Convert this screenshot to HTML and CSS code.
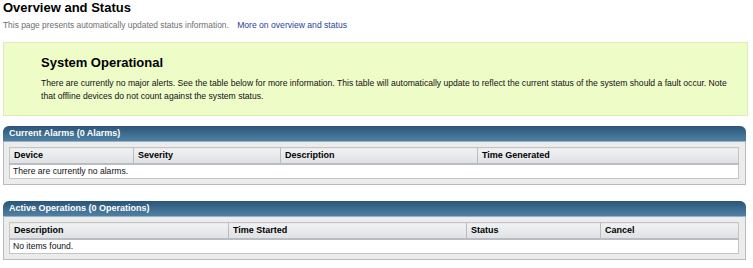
FILE: index.html
```html
<!DOCTYPE html>
<html lang="en">
<head>
    <meta charset="UTF-8">
    <title>Overview and Status</title>
    <link rel="stylesheet" href="styles.css">
</head>
<body>

    <h1>Overview and Status</h1>
    <p class="intro">This page presents automatically updated status information. <a href="#">More on overview and status</a></p>

    <div class="status-box">
        <h2>System Operational</h2>
        <p>There are currently no major alerts. See the table below for more information. This table will automatically update to reflect the current status of the system should a fault occur. Note that offline devices do not count against the system status.</p>
    </div>

    <div class="panel">
        <div class="panel-title">Current Alarms (0 Alarms)</div>
        <div class="panel-body">
            <table>
                <tr>
                    <th style="width:115px">Device</th>
                    <th style="width:138px">Severity</th>
                    <th style="width:188px">Description</th>
                    <th>Time Generated</th>
                </tr>
                <tr><td colspan="4">There are currently no alarms.</td></tr>
            </table>
        </div>
    </div>

    <div class="panel">
        <div class="panel-title">Active Operations (0 Operations)</div>
        <div class="panel-body">
            <table>
                <tr>
                    <th style="width:210px">Description</th>
                    <th style="width:229px">Time Started</th>
                    <th style="width:125px">Status</th>
                    <th>Cancel</th>
                </tr>
                <tr><td colspan="4">No items found.</td></tr>
            </table>
        </div>
    </div>

</body>
</html>
```

FILE: styles.css
```css
body {
    font-family: 'Liberation Sans', Arial, sans-serif;
    margin: 0;
    padding: 0 5px 0 3px;
    background: #ffffff;
    color: #111111;
}
h1 {
    font-size: 13px;
    margin: 0;
    line-height: 16px;
    color: #000000;
}
.intro {
    font-size: 8.4px;
    color: #6f6f6f;
    margin: 3px 0 0 0;
    line-height: 12px;
}
.intro a {
    color: #1f3f9e;
    font-size: 8.6px;
    text-decoration: none;
    margin-left: 6px;
}
.status-box {
    margin-top: 11px;
    background-color: #eefcc8;
    border: 1px solid #d9efb8;
    padding: 12px 10px 0 37px;
    height: 60px;
}
.status-box h2 {
    font-size: 13px;
    margin: 0;
    line-height: 16px;
    color: #000000;
}
.status-box p {
    font-size: 8.6px;
    margin: 6px 0 0 0;
    line-height: 13px;
}
.panel {
    margin: 10px 2px 0 0;
    border: 1px solid #b8bcc0;
    border-top: none;
    border-radius: 6px 6px 0 0;
    background: #ececec;
}
.panel + .panel {
    margin-top: 16px;
}
.panel-title {
    background: linear-gradient(#2a5576, #4f81a4);
    color: #ffffff;
    font-size: 9px;
    font-weight: bold;
    padding: 2px 6px;
    height: 11px;
    line-height: 11px;
    border-radius: 6px 6px 0 0;
    margin: 0 -1px;
    border-bottom: 1px solid #9bb0c0;
}
.panel-body {
    padding: 5px 6px 5px 5px;
}
table {
    width: 100%;
    border-collapse: collapse;
    font-size: 9px;
    background: #ffffff;
    border: 1px solid #c4c4c4;
}
th {
    text-align: left;
    background: linear-gradient(#f0f1f3, #dfe1e4);
    border-right: 1px solid #b9bcc0;
    border-bottom: 2px solid #b9bcc0;
    padding: 2px 4px;
    height: 11px;
    line-height: 11px;
    color: #000000;
}
th:last-child {
    border-right: none;
}
td {
    padding: 1px 4px 1px 3px;
    font-size: 8.6px;
    line-height: 11px;
    height: 11px;
}
```
